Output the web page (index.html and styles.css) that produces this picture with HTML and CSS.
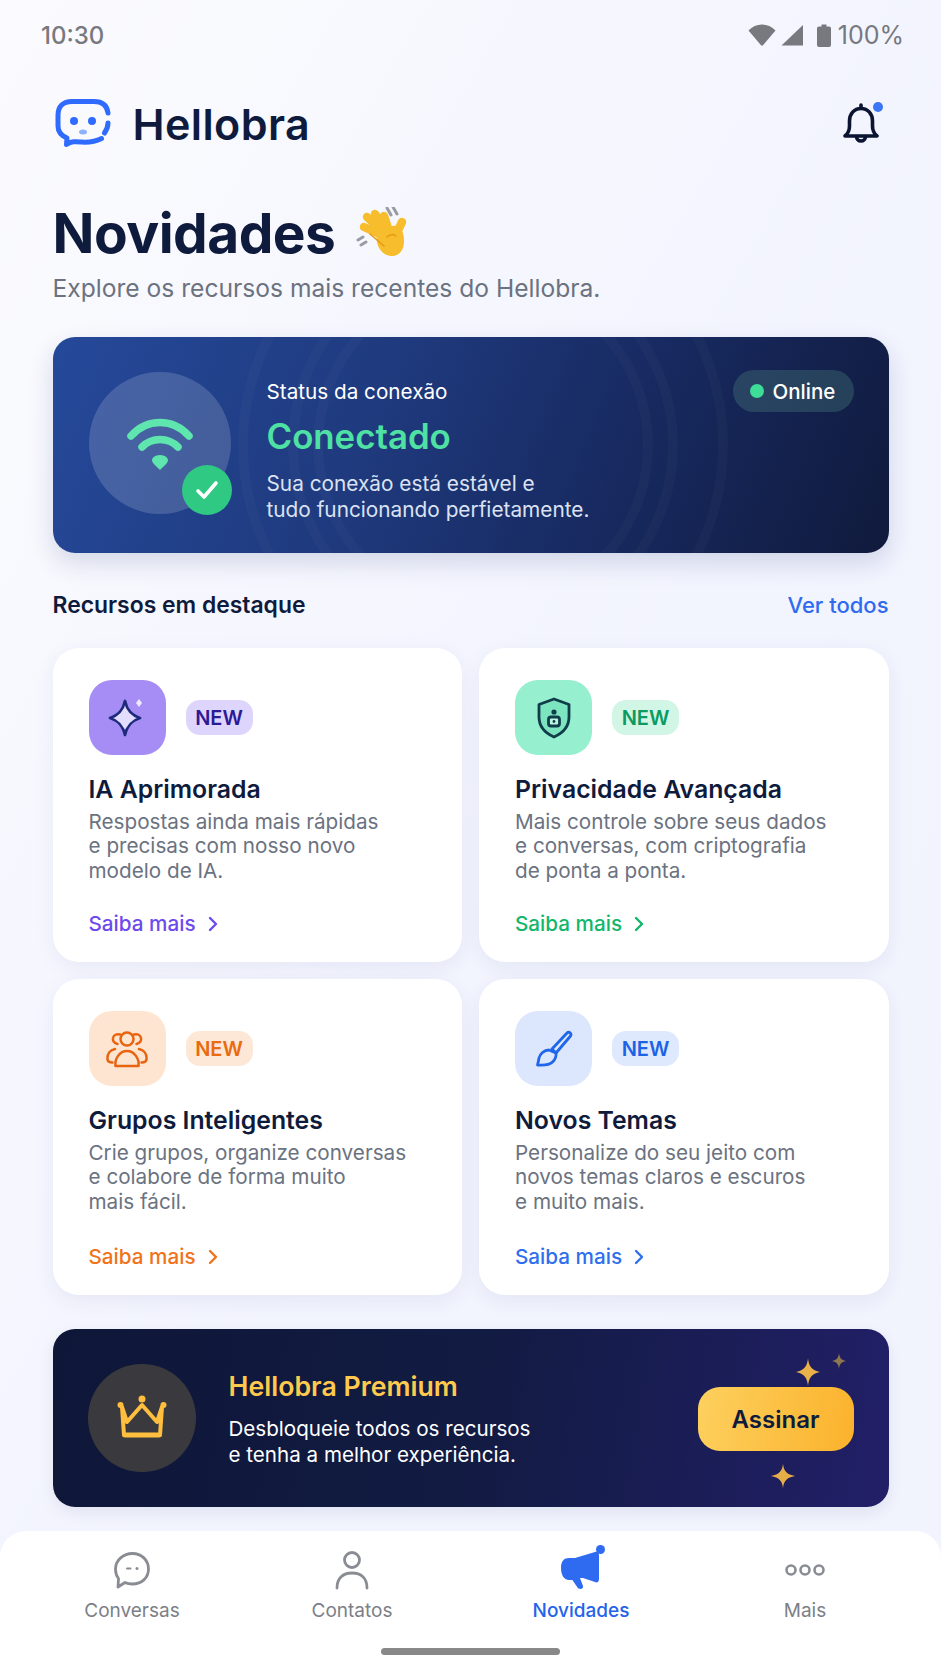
FILE: index.html
```html
<!DOCTYPE html>
<html lang="pt-BR">
<head>
    <meta charset="UTF-8">
    <title>Hellobra - Novidades</title>
    <link rel="stylesheet" href="styles.css">
</head>
<body>
<div class="phone">
    <div class="status-bar">
        <span class="clock">10:30</span>
        <div class="status-icons">
            <svg width="28" height="22" viewBox="0 0 28 22"><path d="M0.5 6.5C4 2.5 9 0.5 14 0.5s10 2 13.5 6L15.2 21a1.6 1.6 0 0 1-2.4 0z" fill="#77797f"/></svg>
            <svg class="signal" width="23" height="22" viewBox="0 0 23 22"><path d="M22 1v20.5H0.5z" fill="#77797f"/></svg>
            <svg class="battery" width="14" height="23" viewBox="0 0 14 23"><path d="M4.500 0.500h5v2H12a2 2 0 0 1 2 2V21a2 2 0 0 1-2 2H2a2 2 0 0 1-2-2V4.500a2 2 0 0 1 2-2h2.500z" fill="#77797f"/></svg>
            <span>100%</span>
        </div>
    </div>

    <main class="content">
        <header class="top">
            <div class="brand">
                <svg width="56" height="52" viewBox="0 0 56 52" fill="none" stroke="#2f6bff" stroke-width="5" stroke-linecap="round" stroke-linejoin="round">
                    <path d="M53 15C52 7 47 3.500 39 3.500H17C8 3.500 3 8.500 3 17v11c0 6 3 9.500 9 12l-.5 6.500c5-3.500 9-3 15-2.500 7 .5 13 0 20-3.500"/>
                    <path d="M53 25c0 4-1.500 7-3.500 10"/>
                    <circle cx="19" cy="23" r="4" fill="#2f6bff" stroke="none"/>
                    <circle cx="37" cy="23" r="4" fill="#2f6bff" stroke="none"/>
                    <ellipse cx="28" cy="34" rx="4" ry="2.500" fill="#8db2ff" stroke="none"/>
                </svg>
                <span class="brand-name">Hellobra</span>
            </div>
            <div class="bell">
                <svg width="36" height="42" viewBox="0 0 36 42" fill="none" stroke="#0b1430" stroke-width="3.600" stroke-linecap="round" stroke-linejoin="round">
                    <path d="M18 2v3"/>
                    <path d="M2 33c2.500-2 4.500-5 4.500-10v-5C6.500 11 11 5.500 18 5.500S29.500 11 29.500 18v5c0 5 2 8 4.500 10z"/>
                    <path d="M13.500 33.500a4.500 4.500 0 0 0 9 0"/>
                </svg>
                <span class="bell-dot"></span>
            </div>
        </header>

        <h1 class="page-title">Novidades
            <svg class="wave" width="52" height="52" viewBox="0 0 52 52" fill="none" stroke-linecap="round">
                <g stroke="#f8bd2c" stroke-width="8.500">
                    <path d="M30 30L8 20"/>
                    <path d="M30 28L11 10"/>
                    <path d="M31 27L19 7"/>
                    <path d="M34 27L28 9"/>
                    <path d="M39 30l7-15"/>
                </g>
                <path d="M21 26c-2 10 3 22 14 23 9 .5 13-7 13-15 0-6-2-12-4-14-6-3-18 0-23 6z" fill="#f8bd2c"/>
                <path d="M31 30c3-3 7-3 9-1M14 27l14 12" stroke="#e59a12" stroke-width="1.500"/>
                <path d="M31 1l4 7M37 0l4 7M2 33l5-3M5 38l5-3" stroke="#9a9ca3" stroke-width="3"/>
            </svg>
        </h1>
        <p class="page-sub">Explore os recursos mais recentes do Hellobra.</p>

        <section class="hero">
            <svg class="hero-rings" viewBox="0 0 836 216" fill="none" stroke="#fff" stroke-opacity=".022" stroke-width="10">
                <circle cx="430" cy="108" r="165"/>
                <circle cx="430" cy="108" r="190"/>
                <circle cx="430" cy="108" r="240"/>
            </svg>
            <div class="hero-icon">
                <svg width="66" height="54" viewBox="0 0 66 54" fill="none" stroke="#5ee6ae" stroke-width="7.500" stroke-linecap="round">
                    <path d="M4 19C20 1 46 1 62 19"/>
                    <path d="M15 30c10-10 26-10 36 0"/>
                    <path d="M33 38c5 0 8 3 8 5 0 3-5 7-8 10-3-3-8-7-8-10 0-2 3-5 8-5z" fill="#5ee6ae" stroke="none"/>
                </svg>
                <span class="hero-check">
                    <svg width="24" height="20" viewBox="0 0 24 20" fill="none" stroke="#fff" stroke-width="3.600" stroke-linecap="round" stroke-linejoin="round"><path d="M3 11l6 6L21 3"/></svg>
                </span>
            </div>
            <div class="hero-text">
                <div class="hero-label">Status da conexão</div>
                <div class="hero-state">Conectado</div>
                <p class="hero-desc">Sua conexão está estável e<br>tudo funcionando perfietamente.</p>
            </div>
            <div class="online-pill"><span class="online-dot"></span>Online</div>
        </section>

        <div class="section-head">
            <h2>Recursos em destaque</h2>
            <a class="see-all">Ver todos</a>
        </div>

        <div class="cards">
            <article class="card purple">
                <div class="card-head">
                    <div class="card-icon">
                        <svg width="44" height="44" viewBox="0 0 44 44" fill="none">
                            <path d="M20 5c2 9 6 14 15 17-9 3-13 8-15 17-2-9-6-14-15-17 9-3 13-8 15-17z" fill="#e3defe" stroke="#1f2a7c" stroke-width="2.800" stroke-linejoin="round"/>
                            <path d="M34 3l3 4-3 4-3-4z" fill="#efeaff"/>
                        </svg>
                    </div>
                    <span class="tag">NEW</span>
                </div>
                <h3>IA Aprimorada</h3>
                <p>Respostas ainda mais rápidas<br>e precisas com nosso novo<br>modelo de IA.</p>
                <a class="more">Saiba mais
                    <svg width="12" height="16" viewBox="0 0 12 16" fill="none" stroke="currentColor" stroke-width="2.400" stroke-linecap="round" stroke-linejoin="round"><path d="M3 2l6 6-6 6"/></svg>
                </a>
            </article>

            <article class="card green">
                <div class="card-head">
                    <div class="card-icon">
                        <svg width="36" height="42" viewBox="0 0 36 42" fill="none" stroke="#103c4a" stroke-width="2.800" stroke-linejoin="round">
                            <path d="M18 2l15 5.500V20c0 10-6 16-15 20C9 36 3 30 3 20V7.500z" fill="#7ce5bf"/>
                            <circle cx="18" cy="15" r="2.600" fill="#103c4a" stroke="none"/>
                            <rect x="12.500" y="20" width="11" height="9" rx="2.500" fill="#b9f5de"/>
                            <circle cx="18" cy="24.500" r="1.400" fill="#103c4a" stroke="none"/>
                        </svg>
                    </div>
                    <span class="tag">NEW</span>
                </div>
                <h3>Privacidade Avançada</h3>
                <p>Mais controle sobre seus dados<br>e conversas, com criptografia<br>de ponta a ponta.</p>
                <a class="more">Saiba mais
                    <svg width="12" height="16" viewBox="0 0 12 16" fill="none" stroke="currentColor" stroke-width="2.400" stroke-linecap="round" stroke-linejoin="round"><path d="M3 2l6 6-6 6"/></svg>
                </a>
            </article>

            <article class="card orange">
                <div class="card-head">
                    <div class="card-icon">
                        <svg width="42" height="38" viewBox="0 0 42 38" fill="none" stroke="#e8640f" stroke-width="2.500" stroke-linecap="round" stroke-linejoin="round">
                            <circle cx="21" cy="9" r="6.500"/>
                            <path d="M11.500 14C8 13 6.500 10.500 7 8c.5-3 3.500-4.500 7-3.500"/>
                            <path d="M30.500 14c3.500-1 5-3.500 4.500-6-.5-3-3.500-4.500-7-3.500"/>
                            <path d="M9.500 36c-1-7 4-15 11.500-15s12.500 8 11.500 15z"/>
                            <path d="M9 19C4 20 1 24 1.500 29.500c.3 2 2 3 5 3"/>
                            <path d="M33 19c5 1 8 5 7.500 10.500-.3 2-2 3-5 3"/>
                        </svg>
                    </div>
                    <span class="tag">NEW</span>
                </div>
                <h3>Grupos Inteligentes</h3>
                <p>Crie grupos, organize conversas<br>e colabore de forma muito<br>mais fácil.</p>
                <a class="more">Saiba mais
                    <svg width="12" height="16" viewBox="0 0 12 16" fill="none" stroke="currentColor" stroke-width="2.400" stroke-linecap="round" stroke-linejoin="round"><path d="M3 2l6 6-6 6"/></svg>
                </a>
            </article>

            <article class="card blue">
                <div class="card-head">
                    <div class="card-icon">
                        <svg width="38" height="38" viewBox="0 0 38 38" fill="none" stroke="#1f66ea" stroke-width="2.800" stroke-linecap="round" stroke-linejoin="round">
                            <path d="M17 19L32 3c2-2 5 .5 3.500 3L21 23z"/>
                            <path d="M14 20c-5 0-9 4-10 8-.5 3-1 5-1.500 7 6 .5 12 0 15-3 3-3 4-6 3.500-9z"/>
                        </svg>
                    </div>
                    <span class="tag">NEW</span>
                </div>
                <h3>Novos Temas</h3>
                <p>Personalize do seu jeito com<br>novos temas claros e escuros<br>e muito mais.</p>
                <a class="more">Saiba mais
                    <svg width="12" height="16" viewBox="0 0 12 16" fill="none" stroke="currentColor" stroke-width="2.400" stroke-linecap="round" stroke-linejoin="round"><path d="M3 2l6 6-6 6"/></svg>
                </a>
            </article>
        </div>

        <section class="premium">
            <div class="crown">
                <svg width="50" height="44" viewBox="0 0 50 44" fill="none" stroke="#ffbe3d" stroke-width="4" stroke-linejoin="round" stroke-linecap="round">
                    <path d="M5 13l5 15 15-17 15 17 5-15-2 28H7z" fill="#3a3a3e"/>
                    <circle cx="25" cy="5" r="3.500" fill="#ffbe3d" stroke="none"/>
                    <circle cx="3.500" cy="11" r="3" fill="#ffbe3d" stroke="none"/>
                    <circle cx="46.500" cy="11" r="3" fill="#ffbe3d" stroke="none"/>
                    <path d="M8 41h34" stroke-width="5"/>
                </svg>
            </div>
            <div class="premium-text">
                <div class="premium-title">Hellobra Premium</div>
                <p>Desbloqueie todos os recursos<br>e tenha a melhor experiência.</p>
            </div>
            <a class="subscribe">Assinar</a>
            <svg class="spark spark-a" width="24" height="28" viewBox="0 0 26 30"><path d="M13 0c1 9 4 13 13 15-9 2-12 6-13 15-1-9-4-13-13-15 9-2 12-6 13-15z" fill="#eab14a"/></svg>
            <svg class="spark spark-b" width="14" height="16" viewBox="0 0 26 30"><path d="M13 0c1 9 4 13 13 15-9 2-12 6-13 15-1-9-4-13-13-15 9-2 12-6 13-15z" fill="#8f7850"/></svg>
            <svg class="spark spark-c" width="24" height="24" viewBox="0 0 26 30" preserveAspectRatio="none"><path d="M13 0c1 9 4 13 13 15-9 2-12 6-13 15-1-9-4-13-13-15 9-2 12-6 13-15z" fill="#e6ae48"/></svg>
        </section>
    </main>

    <nav class="tabbar">
        <div class="tabs">
            <a class="tab">
                <svg width="44" height="40" viewBox="0 0 44 40" fill="none" stroke="#8a8c93" stroke-width="2.800" stroke-linejoin="round">
                    <path d="M22.500 3.500c9 0 16 6.500 16 15.500S31.500 34 22.500 34c-3 0-5.500-.5-7.500-1.500L8 37l.5-8.500C6.500 26 5.500 23 5.500 19 5.500 10 13.500 3.500 22.500 3.500z"/>
                    <path d="M17 18.500h3.500" stroke-width="2" stroke-linecap="round"/>
                    <circle cx="27" cy="18.500" r="1.500" fill="#8a8c93" stroke="none"/>
                </svg>
                <span>Conversas</span>
            </a>
            <a class="tab">
                <svg width="44" height="40" viewBox="0 0 44 40" fill="none" stroke="#8a8c93" stroke-width="2.800" stroke-linecap="round">
                    <circle cx="22" cy="10" r="7.500"/>
                    <path d="M7 38c0-10 6-15 15-15s15 5 15 15"/>
                </svg>
                <span>Contatos</span>
            </a>
            <a class="tab active">
                <span class="tab-icon">
                    <svg width="44" height="40" viewBox="0 0 44 40" fill="#2f6bf0">
                        <path d="M36 2c2-1 4 0 4 3v24c0 3-2 4-4 3L24 28l-3 0v0L19 30H10C5 30 2 25 2 18S5 8 10 8h6z"/>
                        <path d="M12 28h9l3 8c1 3-4 4-5.500 1.500z"/>
                    </svg>
                    <span class="tab-dot"></span>
                </span>
                <span>Novidades</span>
            </a>
            <a class="tab">
                <svg width="44" height="40" viewBox="0 0 44 40" fill="none" stroke="#8a8c93" stroke-width="2.600">
                    <circle cx="8" cy="20" r="4.500"/>
                    <circle cx="22" cy="20" r="4.500"/>
                    <circle cx="36" cy="20" r="4.500"/>
                </svg>
                <span>Mais</span>
            </a>
        </div>
        <div class="home-bar"></div>
    </nav>
</div>
</body>
</html>
```

FILE: styles.css
```css
* {
    box-sizing: border-box;
}

body {
    margin: 0;
    font-family: "Inter", "Noto Sans", sans-serif;
    color: #0f1b3d;
}

h1, h2, h3, p {
    margin: 0;
    font-size: inherit;
    font-weight: inherit;
}

.phone {
    width: 941px;
    height: 1672px;
    overflow: hidden;
    background: linear-gradient(120deg, #fbfbfe 0%, #f2f4fe 55%, #f1f3fd 100%);
}

/* status bar */
.status-bar {
    height: 70px;
    padding: 0 37px 0 41px;
    display: flex;
    align-items: center;
    justify-content: space-between;
    color: #77797f;
    font-size: 24px;
    font-weight: 500;
}

.status-icons {
    display: flex;
    align-items: center;
}

.status-icons span {
    margin-left: 7px;
    font-size: 25px;
    font-weight: 400;
}

.signal {
    margin-left: 5px;
}

.battery {
    margin-left: 13px;
}

/* page */
.content {
    padding: 0 52.5px;
}

.top {
    margin-top: 28px;
    height: 52px;
    display: flex;
    align-items: center;
    justify-content: space-between;
}

.brand {
    display: flex;
    align-items: center;
    gap: 22px;
    margin-left: 2px;
}

.brand-name {
    font-size: 43px;
    font-weight: 600;
    letter-spacing: 0.4px;
}

.bell {
    position: relative;
    width: 36px;
    height: 42px;
    margin-right: 10px;
}

.bell-dot {
    position: absolute;
    top: -1px;
    right: -4px;
    width: 10px;
    height: 10px;
    border-radius: 50%;
    background: #3b76f6;
}

.page-title {
    margin-top: 51px;
    height: 64px;
    display: flex;
    align-items: center;
    font-size: 55px;
    line-height: 64px;
    font-weight: 700;
    letter-spacing: -0.5px;
}

.wave {
    margin-left: 21px;
}

.page-sub {
    margin-top: 8px;
    font-size: 24.6px;
    line-height: 30px;
    color: #6b7280;
}

/* conexao */
.hero {
    position: relative;
    margin-top: 34px;
    height: 216px;
    padding: 33px 35px 0 36px;
    display: flex;
    align-items: flex-start;
    border-radius: 22px;
    overflow: hidden;
    color: #fff;
    background: linear-gradient(112deg, #25499a 0%, #1f3a7e 38%, #17295f 68%, #101a3c 100%);
    box-shadow: 0 10px 24px rgba(30, 50, 110, 0.16);
}

.hero-rings {
    position: absolute;
    top: 0;
    left: 0;
    width: 100%;
    height: 100%;
}

.hero-icon {
    position: relative;
    flex: none;
    width: 142px;
    height: 142px;
    margin-top: 2px;
    padding-top: 45px;
    display: flex;
    justify-content: center;
    align-items: flex-start;
    border-radius: 50%;
    background: rgba(255, 255, 255, 0.16);
}

.hero-check {
    position: absolute;
    right: -1px;
    bottom: -1px;
    width: 50px;
    height: 50px;
    display: flex;
    align-items: center;
    justify-content: center;
    border-radius: 50%;
    background: #2fc983;
}

.hero-text {
    position: relative;
    flex: 1;
    margin-left: 36px;
    padding-top: 10px;
}

.hero-label {
    font-size: 20.7px;
    line-height: 24px;
}

.hero-state {
    margin-top: 11px;
    font-size: 34.8px;
    line-height: 42px;
    font-weight: 600;
    color: #4fe0a4;
}

.hero-desc {
    margin-top: 14px;
    font-size: 20.8px;
    line-height: 25.5px;
    color: #dbe2f2;
}

.online-pill {
    position: relative;
    width: 121px;
    height: 42px;
    display: flex;
    align-items: center;
    padding-left: 17px;
    gap: 9px;
    border-radius: 21px;
    font-size: 20.5px;
    font-weight: 500;
    background: rgba(70, 120, 120, 0.38);
}

.online-dot {
    width: 14px;
    height: 14px;
    border-radius: 50%;
    background: #3ddc97;
}

/* destaque */
.section-head {
    margin-top: 38px;
    display: flex;
    justify-content: space-between;
    font-size: 22.9px;
    line-height: 28px;
    font-weight: 600;
}

.see-all {
    color: #2f6bf0;
    font-size: 22px;
    font-weight: 500;
}

.cards {
    margin-top: 29px;
    display: grid;
    grid-template-columns: 1fr 1fr;
    grid-template-rows: 314px 316px;
    gap: 17px;
}

.card {
    padding: 32px 36px 25px;
    display: flex;
    flex-direction: column;
    border-radius: 26px;
    background: #fff;
    box-shadow: 0 6px 20px rgba(40, 60, 130, 0.07);
}

.card-head {
    display: flex;
    align-items: center;
    gap: 20px;
}

.card-icon {
    width: 77px;
    height: 75px;
    display: flex;
    align-items: center;
    justify-content: center;
    border-radius: 23px;
}

.tag {
    width: 67px;
    height: 35px;
    display: flex;
    align-items: center;
    justify-content: center;
    border-radius: 14px;
    font-size: 20px;
    font-weight: 600;
}

.card h3 {
    margin-top: 18.5px;
    font-size: 24.8px;
    line-height: 30px;
    font-weight: 600;
}

.card p {
    margin-top: 6px;
    font-size: 20.7px;
    line-height: 24.5px;
    color: #6b7280;
}

.more {
    margin-top: auto;
    display: flex;
    align-items: center;
    gap: 11px;
    font-size: 20.7px;
    line-height: 26px;
    font-weight: 500;
}

.purple .card-icon { background: #a58df5; }
.purple .tag { background: #ddd5fb; color: #2c1a96; }
.purple .more { color: #6d4aee; }

.green .card-icon { background: #96efcf; }
.green .tag { background: #d2f6e6; color: #0a9a62; }
.green .more { color: #12b76a; }

.orange .card-icon { background: #fde5d2; }
.orange .tag { background: #fde8d7; color: #ea6a10; }
.orange .more { color: #f0731a; }

.blue .card-icon { background: #dce7fd; }
.blue .tag { background: #dfe9fd; color: #1d63e6; }
.blue .more { color: #2f6fed; }

/* premium */
.premium {
    position: relative;
    margin-top: 34px;
    height: 178px;
    padding: 0 35px 0 35px;
    display: flex;
    align-items: flex-start;
    border-radius: 22px;
    color: #fff;
    background: linear-gradient(100deg, #0e1738 0%, #121b42 50%, #221f68 100%);
    box-shadow: 0 6px 16px rgba(30, 40, 90, 0.08);
}

.crown {
    flex: none;
    width: 108px;
    height: 108px;
    margin-top: 35px;
    padding-bottom: 4px;
    display: flex;
    align-items: center;
    justify-content: center;
    border-radius: 50%;
    background: #3a3a3e;
}

.premium-text {
    margin: 41px 0 0 33px;
}

.premium-title {
    font-size: 26.7px;
    line-height: 32px;
    font-weight: 600;
    color: #ffc94d;
}

.premium-text p {
    margin-top: 14px;
    font-size: 20.6px;
    line-height: 26px;
}

.subscribe {
    width: 156px;
    height: 64px;
    margin: 58px 0 0 auto;
    display: flex;
    align-items: center;
    justify-content: center;
    border-radius: 22px;
    font-size: 24px;
    font-weight: 600;
    color: #0f1b3d;
    background: linear-gradient(100deg, #fdd05e 0%, #fbb22c 100%);
}

.spark {
    position: absolute;
}

.spark-a {
    top: 29px;
    left: 743px;
}

.spark-b {
    top: 24px;
    left: 779px;
}

.spark-c {
    top: 135px;
    left: 718px;
}

/* tab bar */
.tabbar {
    margin-top: 24px;
    height: 141px;
    padding-top: 19px;
    border-radius: 26px 26px 0 0;
    background: #fff;
}

.tabs {
    display: grid;
    grid-template-columns: 224px 216px 242px 206px;
    padding-left: 20px;
}

.tab {
    display: flex;
    flex-direction: column;
    align-items: center;
    gap: 10px;
    font-size: 19px;
    line-height: 22px;
    color: #7c7f87;
}

.tab svg {
    display: block;
}

.tab-icon {
    position: relative;
    display: block;
}

.tab-dot {
    position: absolute;
    top: -5px;
    right: -2px;
    width: 9px;
    height: 9px;
    border-radius: 50%;
    background: #2f6bf0;
}

.tab.active {
    color: #2563eb;
    font-weight: 500;
}

.home-bar {
    width: 179px;
    height: 7px;
    margin: 26px auto 0;
    border-radius: 4px;
    background: #888;
}
```
